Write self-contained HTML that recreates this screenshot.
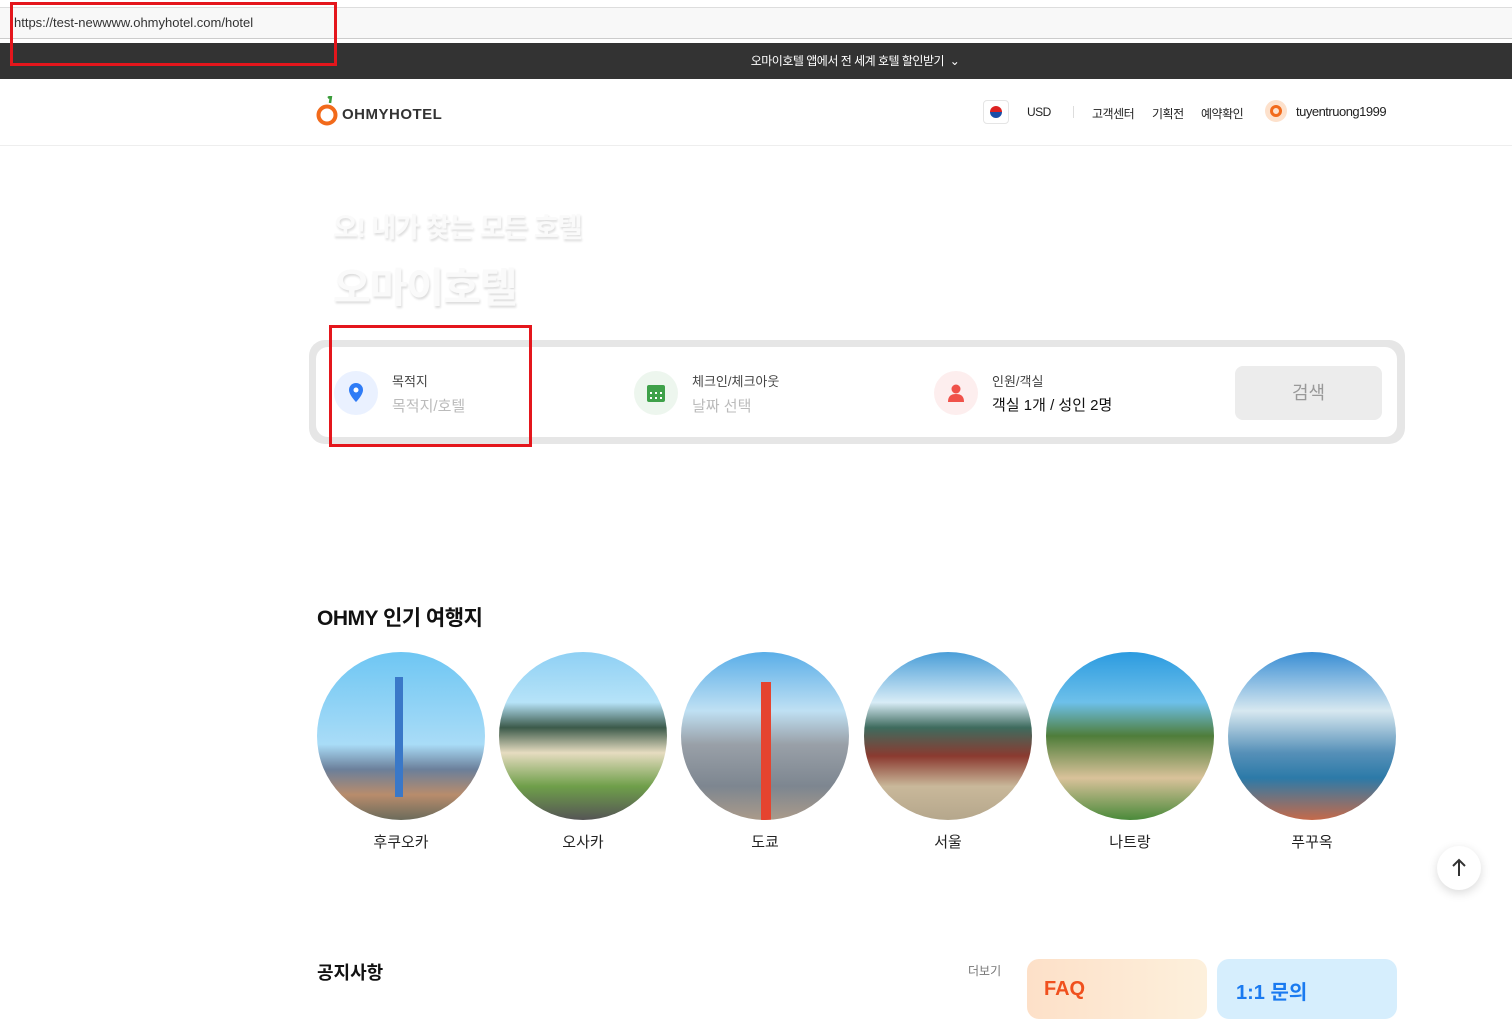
<!DOCTYPE html>
<html><head><meta charset="utf-8">
<style>
*{margin:0;padding:0;box-sizing:border-box}
body{width:1512px;height:997px;overflow:hidden;background:#fff;font-family:"Liberation Sans","Noto Sans CJK KR",sans-serif;color:#222;position:relative}
.abs{position:absolute}
.url{left:0;top:7px;width:1512px;height:32px;background:#f8f8f8;border-top:1px solid #ddd;border-bottom:1px solid #ccc}
.url span{position:absolute;left:14px;top:7px;font-size:13px;color:#333;font-family:"Liberation Sans",sans-serif}
.bar{left:0;top:43px;width:1512px;height:36px;background:#333;color:#fff;font-size:12px;text-align:center;line-height:36px;padding-left:198px;letter-spacing:-0.5px}
.red{border:3px solid #e4161c}
.nav{font-size:12px;color:#222;letter-spacing:-0.5px}
.circ{width:168px;height:168px;border-radius:50%;top:652px;overflow:hidden}
.lbl{top:831px;width:168px;text-align:center;font-size:15px}
</style></head><body>
<div class="abs url"><span>https://test-newwww.ohmyhotel.com/hotel</span></div>
<div class="abs bar">오마이호텔 앱에서 전 세계 호텔 할인받기 &nbsp;⌄</div>
<div class="abs red" style="left:10px;top:2px;width:327px;height:64px"></div>

<svg class="abs" style="left:316px;top:96px" width="24" height="32" viewBox="0 0 24 32"><path d="M12 2 L15 0 L14 7" stroke="#3a9c3a" stroke-width="2.5" fill="none"/><circle cx="11" cy="19" r="8.5" fill="none" stroke="#f26a1b" stroke-width="4"/></svg>
<div class="abs" style="left:342px;top:106px;font-size:15px;font-weight:bold;color:#333;letter-spacing:0.5px">OHMYHOTEL</div>
<div class="abs" style="left:983px;top:100px;width:26px;height:24px;border:1px solid #e5e5e5;border-radius:4px;background:#fff"><div style="margin:5px auto;width:12px;height:12px;border-radius:50%;background:linear-gradient(#d22 50%,#1a4ea8 50%)"></div></div>
<div class="abs nav" style="left:1027px;top:105px">USD</div>
<div class="abs" style="left:1073px;top:106px;width:1px;height:12px;background:#ddd"></div>
<div class="abs nav" style="left:1092px;top:105px">고객센터</div>
<div class="abs nav" style="left:1152px;top:105px">기획전</div>
<div class="abs nav" style="left:1201px;top:105px">예약확인</div>
<div class="abs" style="left:1265px;top:100px;width:22px;height:22px;border-radius:50%;background:#fde1cc"><div style="margin:5px;width:12px;height:12px;border-radius:50%;border:3px solid #f26a1b"></div></div>
<div class="abs nav" style="left:1296px;top:104px;font-size:13px">tuyentruong1999</div>
<div class="abs" style="left:0;top:145px;width:1512px;height:1px;background:#eee"></div>

<div class="abs" style="left:333px;top:206px;font-size:27px;color:#fafafa;font-weight:bold;text-shadow:1px 2px 2px #ddd;letter-spacing:-1px">오! 내가 찾는 모든 호텔</div>
<div class="abs" style="left:333px;top:254px;font-size:41px;color:#fafafa;font-weight:bold;text-shadow:1px 2px 2px #ddd;letter-spacing:-1px">오마이호텔</div>

<div class="abs" style="left:309px;top:340px;width:1096px;height:104px;border-radius:16px;background:#e6e6e6"></div>
<div class="abs" style="left:316px;top:347px;width:1081px;height:90px;border-radius:12px;background:#fff"></div>
<div class="abs" style="left:334px;top:371px;width:44px;height:44px;border-radius:50%;background:#eaf1ff"><svg width="44" height="44"><path d="M22 12a7 7 0 0 0-7 7c0 5 7 12 7 12s7-7 7-12a7 7 0 0 0-7-7z" fill="#2f7cf6"/><circle cx="22" cy="19" r="2.5" fill="#fff"/></svg></div>
<div class="abs" style="left:392px;top:371px;font-size:13px;color:#444">목적지</div>
<div class="abs" style="left:392px;top:395px;font-size:15px;color:#bbb">목적지/호텔</div>
<div class="abs" style="left:634px;top:371px;width:44px;height:44px;border-radius:50%;background:#edf6ee"><svg width="44" height="44"><rect x="13" y="14" width="18" height="17" rx="2" fill="#3fa14a"/><g fill="#fff"><rect x="16" y="21" width="2" height="2"/><rect x="21" y="21" width="2" height="2"/><rect x="26" y="21" width="2" height="2"/><rect x="16" y="26" width="2" height="2"/><rect x="21" y="26" width="2" height="2"/><rect x="26" y="26" width="2" height="2"/></g></svg></div>
<div class="abs" style="left:692px;top:371px;font-size:13px;color:#444">체크인/체크아웃</div>
<div class="abs" style="left:692px;top:395px;font-size:15px;color:#bbb">날짜 선택</div>
<div class="abs" style="left:934px;top:371px;width:44px;height:44px;border-radius:50%;background:#fdeeee"><svg width="44" height="44"><circle cx="22" cy="18" r="4.5" fill="#f0524a"/><path d="M14 31c0-6 3-8 8-8s8 2 8 8z" fill="#f0524a"/></svg></div>
<div class="abs" style="left:992px;top:371px;font-size:13px;color:#444">인원/객실</div>
<div class="abs" style="left:992px;top:394px;font-size:15px;color:#111">객실 1개 / 성인 2명</div>
<div class="abs" style="left:1235px;top:366px;width:147px;height:54px;border-radius:8px;background:#ececec;color:#999;font-size:18px;text-align:center;line-height:54px">검색</div>
<div class="abs red" style="left:329px;top:325px;width:203px;height:122px"></div>

<div class="abs" style="left:317px;top:602px;font-size:21px;font-weight:bold;color:#111;letter-spacing:-0.5px">OHMY 인기 여행지</div>
<div class="abs circ" style="left:317px;background:linear-gradient(#6ec6f3 0%,#a9dcf7 55%,#6b7f9a 70%,#b88c6c 85%,#6b6b5b 100%)"><div style="position:absolute;left:78px;top:25px;width:8px;height:120px;background:#3a78c8"></div></div>
<div class="abs circ" style="left:499px;background:linear-gradient(#8fd0f4 0%,#b6e3f8 30%,#3c5a4a 45%,#e6dcc0 60%,#6f9f4a 80%,#555 100%)"></div>
<div class="abs circ" style="left:681px;background:linear-gradient(#5aaee8 0%,#bfe0f3 35%,#99a0a8 55%,#7d8690 80%,#aa9a8a 100%)"><div style="position:absolute;left:80px;top:30px;width:10px;height:140px;background:#e5442f"></div></div>
<div class="abs circ" style="left:864px;background:linear-gradient(#4a9ed8 0%,#d8ecf6 30%,#3e6b5e 45%,#8b3a30 62%,#c9b89a 80%,#b5a78c 100%)"></div>
<div class="abs circ" style="left:1046px;background:linear-gradient(#2c9be0 0%,#6dc0ea 30%,#4f7d3a 50%,#d9c29a 75%,#4a8a3a 100%)"></div>
<div class="abs circ" style="left:1228px;background:linear-gradient(#3a8ed4 0%,#d7e8f0 35%,#5690b8 60%,#2c7aa8 75%,#c56a4a 100%)"></div>
<div class="abs lbl" style="left:317px">후쿠오카</div>
<div class="abs lbl" style="left:499px">오사카</div>
<div class="abs lbl" style="left:681px">도쿄</div>
<div class="abs lbl" style="left:864px">서울</div>
<div class="abs lbl" style="left:1046px">나트랑</div>
<div class="abs lbl" style="left:1228px">푸꾸옥</div>

<div class="abs" style="left:1437px;top:846px;width:44px;height:44px;border-radius:50%;background:#fff;box-shadow:0 3px 10px rgba(0,0,0,.15)"><svg width="44" height="44"><path d="M22 30V14M16 20l6-6 6 6" stroke="#333" stroke-width="2" fill="none"/></svg></div>

<div class="abs" style="left:317px;top:959px;font-size:18px;font-weight:bold;color:#111">공지사항</div>
<div class="abs" style="left:968px;top:962px;font-size:12px;color:#777">더보기</div>
<div class="abs" style="left:1027px;top:959px;width:180px;height:60px;border-radius:12px;background:linear-gradient(90deg,#fde0c8,#fdf0dc)"><div style="position:absolute;left:17px;top:19px;font-size:20px;font-weight:bold;color:#f0501e">FAQ</div></div>
<div class="abs" style="left:1217px;top:959px;width:180px;height:60px;border-radius:12px;background:#d6eefd"><div style="position:absolute;left:19px;top:17px;font-size:20px;font-weight:bold;color:#1a7af0">1:1 문의</div></div>
</body></html>
